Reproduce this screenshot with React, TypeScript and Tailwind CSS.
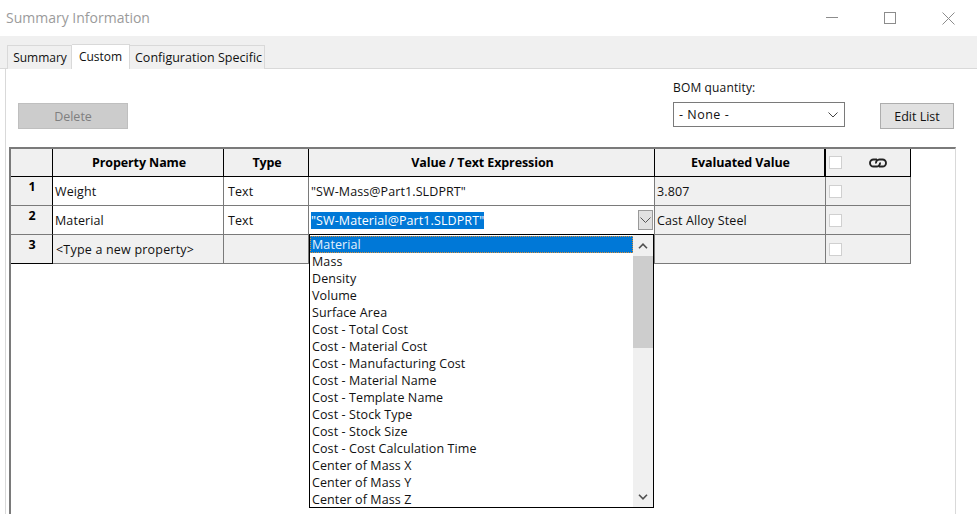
import React from 'react';

const FONT = "font-['Open_Sans',sans-serif]";

const options = [
    'Material',
    'Mass',
    'Density',
    'Volume',
    'Surface Area',
    'Cost - Total Cost',
    'Cost - Material Cost',
    'Cost - Manufacturing Cost',
    'Cost - Material Name',
    'Cost - Template Name',
    'Cost - Stock Type',
    'Cost - Stock Size',
    'Cost - Cost Calculation Time',
    'Center of Mass X',
    'Center of Mass Y',
    'Center of Mass Z',
];

function Check() {
    return <div className="w-[13px] h-[13px] bg-white border border-[#d0d0d0]" />;
}

function HeaderCell({ children, thickRight }: { children?: React.ReactNode; thickRight?: boolean }) {
    return (
        <div
            className={`h-[28px] pt-[1px] pl-[2px] bg-[#f0f0f0] border-b border-r border-b-black border-r-black ${thickRight ? 'border-r-2' : ''} flex items-center justify-center font-bold text-[12.5px] tracking-[-0.1px] text-black`}
        >
            {children}
        </div>
    );
}

function RowHead({ n, last }: { n: number; last?: boolean }) {
    return (
        <div className={`h-[29px] bg-[#f0f0f0] border-r border-r-black border-b ${last ? 'border-b-black' : 'border-b-[#7a7a7a]'} flex justify-center pt-[1px] pl-[1px] font-bold text-[12.5px] text-black`}>
            {n}
        </div>
    );
}

function Cell({ children, gray, inset }: { children?: React.ReactNode; gray?: boolean; inset?: boolean }) {
    return (
        <div className={`h-[29px] pt-[3px] border-r border-b border-[#7a7a7a] ${gray ? 'bg-[#f0f0f0]' : 'bg-white'} flex items-center ${inset ? 'pl-[4px]' : 'pl-[2px]'} text-[12.5px] tracking-[0.1px] text-[#111] whitespace-nowrap`}>
            {children}
        </div>
    );
}

function CheckCell() {
    return (
        <div className="h-[29px] border-r border-b border-[#7a7a7a] bg-[#f0f0f0] flex items-center pl-[3px]">
            <Check />
        </div>
    );
}

function Dropdown() {
    return (
        <div className="absolute left-[298px] top-[85px] w-[345px] h-[274px] bg-white border border-black flex z-10">
            <div className="flex-1 flex flex-col pt-[1px]">
                {options.map((o, i) => (
                    <div
                        key={o}
                        className={`h-[17px] shrink-0 pl-[2px] pt-[2px] flex items-center text-[12.5px] tracking-[0.1px] whitespace-nowrap ${i === 0 ? 'bg-[#0078d7] text-[#e4f1fc] outline-1 outline-dotted outline-[#d98f3a] -outline-offset-1' : 'text-[#111]'}`}
                    >
                        {o}
                    </div>
                ))}
            </div>
            <div className="w-[20px] bg-[#f0f0f0] flex flex-col">
                <div className="h-[21px] flex items-center justify-center">
                    <svg width="10" height="6" viewBox="0 0 10 6" fill="none" stroke="#505050" strokeWidth="1.6">
                        <path d="M1 5.2 L5 1.2 L9 5.2" />
                    </svg>
                </div>
                <div className="h-[92px] bg-[#cdcdcd]" />
                <div className="flex-1" />
                <div className="h-[20px] flex items-center justify-center">
                    <svg width="10" height="6" viewBox="0 0 10 6" fill="none" stroke="#505050" strokeWidth="1.6">
                        <path d="M1 0.8 L5 4.8 L9 0.8" />
                    </svg>
                </div>
            </div>
        </div>
    );
}

export default function App() {
    return (
        <div className={`w-[977px] h-[514px] overflow-hidden bg-white flex flex-col ${FONT}`}>
            {/* title bar */}
            <div className="h-[36px] shrink-0 flex items-center justify-between">
                <span className="pl-[6px] pb-[2px] text-[14px] text-[#9b9b9b]">Summary Information</span>
                <div className="flex items-center gap-[46px] pr-[22px]">
                    <svg width="12" height="12" viewBox="0 0 12 12" stroke="#8c8c8c" fill="none">
                        <path d="M0 5.5 H12" />
                    </svg>
                    <svg width="12" height="12" viewBox="0 0 12 12" stroke="#8c8c8c" fill="none">
                        <rect x="0.5" y="0.5" width="11" height="11" />
                    </svg>
                    <svg width="13" height="13" viewBox="0 0 13 13" stroke="#8c8c8c" fill="none">
                        <path d="M0.5 0.5 L12.5 12.5 M12.5 0.5 L0.5 12.5" />
                    </svg>
                </div>
            </div>

            {/* tabs */}
            <div className="h-[33px] shrink-0 bg-[#f0f0f0] flex items-end pl-[7px] border-b border-[#d9d9d9] text-[12.5px] text-[#111]">
                <div className="h-[24px] w-[65px] -mb-px bg-[#f0f0f0] border border-b-0 border-[#d9d9d9] flex items-center justify-center pt-[1px] pl-[1px] text-[12px]">
                    Summary
                </div>
                <div className="h-[25px] w-[58px] -mb-px bg-white border-t border-r border-[#d9d9d9] flex items-center justify-center pb-[1px] text-[12px]">
                    Custom
                </div>
                <div className="h-[24px] w-[135px] -mb-px bg-[#f0f0f0] border-t border-r border-[#d9d9d9] flex items-center justify-center pt-[1px] pl-[3px]">
                    Configuration Specific
                </div>
            </div>

            {/* panel */}
            <div className="flex-1 ml-[5px] border-l border-[#d9d9d9] flex flex-col">
                {/* toolbar */}
                <div className="h-[78px] shrink-0 flex items-start pl-[12px] text-[12.5px]">
                    <button className="mt-[34px] pt-[2px] w-[110px] h-[26px] bg-[#cccccc] border border-[#bfbfbf] text-[#7f7f7f]">
                        Delete
                    </button>
                    <div className="ml-[545px] mt-[11px] flex flex-col">
                        <span className="h-[16px] leading-[16px] text-[12px] tracking-[0.15px] text-[#111]">BOM quantity:</span>
                        <div className="mt-[6px] pt-[2px] w-[172px] h-[25px] border border-[#7a7a7a] bg-white flex items-center justify-between pl-[5px] pr-[6px] text-[#111]">
                            <span className="tracking-[0.5px]">- None -</span>
                            <svg className="-mt-[2px]" width="10" height="6" viewBox="0 0 10 6" fill="none" stroke="#444" strokeWidth="1">
                                <path d="M0.5 0.5 L5 5 L9.5 0.5" />
                            </svg>
                        </div>
                    </div>
                    <button className="ml-[35px] mt-[34px] pt-[2px] w-[74px] h-[26px] bg-[#e1e1e1] border border-[#adadad] text-[#111]">
                        Edit List
                    </button>
                </div>

                {/* property grid */}
                <div className="relative ml-[3px] w-[947px] flex-1 border-t-2 border-t-[#7a7a7a] border-l-2 border-l-[#7a7a7a] border-r border-r-[#d9d9d9]">
                    <div className="grid grid-cols-[42px_171px_85px_346px_171px_85px] w-[900px]">
                        <HeaderCell />
                        <HeaderCell>Property Name</HeaderCell>
                        <HeaderCell>Type</HeaderCell>
                        <HeaderCell>Value / Text Expression</HeaderCell>
                        <HeaderCell thickRight>Evaluated Value</HeaderCell>
                        <div className="h-[28px] bg-[#f0f0f0] border-b border-r border-black flex items-center pl-[3px]">
                            <Check />
                            <svg className="ml-[27px]" width="18" height="10" viewBox="0 0 18 10" fill="none" stroke="#222" strokeWidth="1.9">
                                <path d="M8 1.5 H4.5 A3.5 3.5 0 0 0 4.5 8.5 H7.5 A3.5 3.5 0 0 0 11 4.5" />
                                <path d="M10 8.5 H13.5 A3.5 3.5 0 0 0 13.5 1.5 H10.5 A3.5 3.5 0 0 0 7 5.5" />
                            </svg>
                        </div>

                        <RowHead n={1} />
                        <Cell>Weight</Cell>
                        <Cell inset>Text</Cell>
                        <Cell>"SW-Mass@Part1.SLDPRT"</Cell>
                        <Cell gray>3.807</Cell>
                        <CheckCell />

                        <RowHead n={2} />
                        <Cell>Material</Cell>
                        <Cell inset>Text</Cell>
                        <Cell>
                            <span className="-mt-[2px] bg-[#0078d7] text-white h-[17px] leading-[18px]">"SW-Material@Part1.SLDPRT"</span>
                            <div className="ml-auto -mt-[3px] mr-[1px] w-[15px] h-[20px] bg-[#e1e1e1] border border-[#999] flex items-center justify-center">
                                <svg width="11" height="6" viewBox="0 0 11 6" fill="none" stroke="#555" strokeWidth="1">
                                    <path d="M0.5 0.5 L5.5 5.5 L10.5 0.5" />
                                </svg>
                            </div>
                        </Cell>
                        <Cell gray>Cast Alloy Steel</Cell>
                        <CheckCell />

                        <RowHead n={3} last />
                        <Cell gray>
                            <span className="tracking-[0.2px] pl-[1px]">&lt;Type a new property&gt;</span>
                        </Cell>
                        <Cell gray />
                        <Cell gray />
                        <Cell gray />
                        <CheckCell />
                    </div>
                    <Dropdown />
                </div>
            </div>
        </div>
    );
}
